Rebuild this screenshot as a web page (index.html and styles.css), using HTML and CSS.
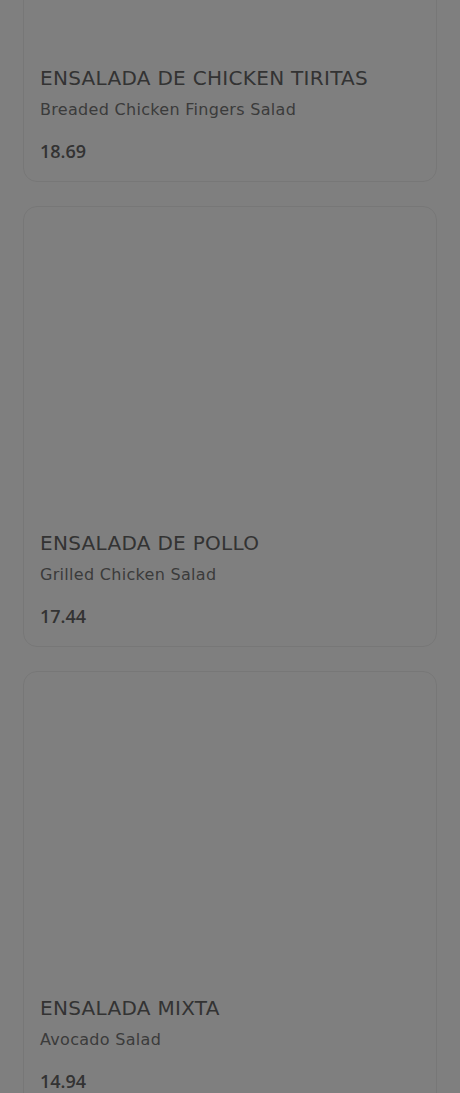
FILE: index.html
```html
<!DOCTYPE html>
<html lang="es">
<head>
  <meta charset="UTF-8" />
  <title>Ensaladas</title>
  <link rel="stylesheet" href="styles.css">
</head>
<body>
  <main class="menu">
    <div class="item">
      <div class="item-photo"></div>
      <div class="item-info">
        <h2>ENSALADA DE CHICKEN TIRITAS</h2>
        <p class="desc">Breaded Chicken Fingers Salad</p>
        <p class="price">18.69</p>
      </div>
    </div>

    <div class="item">
      <div class="item-photo"></div>
      <div class="item-info">
        <h2>ENSALADA DE POLLO</h2>
        <p class="desc">Grilled Chicken Salad</p>
        <p class="price">17.44</p>
      </div>
    </div>

    <div class="item">
      <div class="item-photo"></div>
      <div class="item-info">
        <h2>ENSALADA MIXTA</h2>
        <p class="desc">Avocado Salad</p>
        <p class="price">14.94</p>
      </div>
    </div>
  </main>

  <div class="backdrop"></div>
</body>
</html>
```

FILE: styles.css
```css
body {
  font-family: "DejaVu Sans", "Open Sans", sans-serif;
  margin: 0;
  background: white;
  overflow: hidden;
}

.menu {
  display: flex;
  flex-direction: column;
  gap: 24px;
  padding: 0 23px;
  margin-top: -259px;
}

.item {
  border: 1px solid #eee;
  border-radius: 14px;
  background: white;
  height: 441px;
  box-sizing: border-box;
  display: flex;
  flex-direction: column;
}

.item-photo {
  flex: 1;
}

.item-info {
  padding: 0 16px 18px;
}

.item-info h2 {
  margin: 0;
  font-size: 20px;
  line-height: 28px;
  font-weight: normal;
  letter-spacing: 0.3px;
  color: #666;
}

.desc {
  margin: 6px 0 0;
  font-size: 16px;
  line-height: 24px;
  color: #777;
  letter-spacing: 0.3px;
}

.price {
  margin: 17px 0 0;
  font-family: "Open Sans", sans-serif;
  font-size: 18px;
  line-height: 24px;
  font-weight: 600;
  color: #666;
}

.backdrop {
  position: fixed;
  inset: 0;
  background: rgba(0, 0, 0, 0.5);
}
```
